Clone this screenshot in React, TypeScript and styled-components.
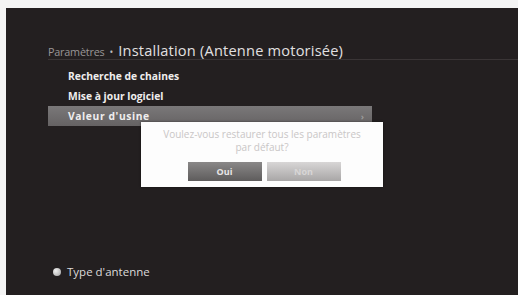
import React from "react";
import styled, { createGlobalStyle } from "styled-components";

const Global = createGlobalStyle`
  html, body { margin: 0; padding: 0; background: #f4f4f4; }
  body { font-family: "Open Sans", "DejaVu Sans", sans-serif; }
`;

const Screen = styled.div`
  width: 518px;
  height: 295px;
  padding: 8px 0 0 6px;
  box-sizing: border-box;
  overflow: hidden;
`;

const Panel = styled.div`
  position: relative;
  height: 100%;
  background: #231f20;
  display: flex;
  flex-direction: column;
  padding: 0 0 0 42px;
  box-sizing: border-box;
`;

const Header = styled.div`
  display: flex;
  align-items: baseline;
  gap: 5px;
  height: 52px;
  padding-top: 32px;
  box-sizing: border-box;
  border-bottom: 1px solid #3a3536;
`;

const Crumb = styled.span`
  font-size: 10.8px;
  letter-spacing: -0.2px;
  color: #9a9696;
`;

const Dot = styled.span`
  font-size: 10px;
  color: #bdbaba;
`;

const Title = styled.span`
  font-size: 14.6px;
  color: #e2e0e0;
  letter-spacing: 0.2px;
`;

const Menu = styled.div`
  display: flex;
  flex-direction: column;
  width: 324px;
  margin-top: 6px;
`;

const Item = styled.div<{ $active?: boolean }>`
  height: 20px;
  display: flex;
  align-items: center;
  justify-content: space-between;
  padding: 0 8px 0 20px;
  font-size: 10.3px;
  font-weight: 700;
  color: #efeded;
  background: ${(p) => (p.$active ? "linear-gradient(#7a7879, #656263)" : "transparent")};
`;

const Label = styled.span<{ $wide?: boolean }>`
  letter-spacing: ${(p) => (p.$wide ? "0.6px" : "0")};
`;

const Chevron = styled.span`
  font-size: 9px;
  color: #9c9a9a;
`;

const Dialog = styled.div`
  position: absolute;
  left: 135px;
  top: 114px;
  width: 242px;
  height: 65px;
  background: #fdfdfd;
  box-shadow: 0 0 2px rgba(0, 0, 0, 0.5);
  display: flex;
  flex-direction: column;
  align-items: center;
  padding-top: 6px;
  box-sizing: border-box;
`;

const Message = styled.div`
  font-size: 10px;
  line-height: 13px;
  color: #c9c6c6;
  text-align: center;
`;

const Buttons = styled.div`
  display: flex;
  gap: 5px;
  margin-top: 8px;
  margin-left: 4px;
`;

const Btn = styled.div<{ $primary?: boolean }>`
  width: 74px;
  height: 19px;
  display: flex;
  align-items: center;
  justify-content: center;
  font-size: 9px;
  font-weight: 700;
  color: ${(p) => (p.$primary ? "#e8e6e6" : "#d8d6d6")};
  background: ${(p) =>
    p.$primary
      ? "linear-gradient(#8a8888, #5e5c5c)"
      : "linear-gradient(#d8d6d6, #a8a6a6)"};
`;

const Footer = styled.div`
  margin-top: auto;
  margin-bottom: 16px;
  display: flex;
  align-items: center;
  gap: 6px;
  padding-left: 5px;
  font-size: 11.5px;
  color: #dcdada;
`;

const Bullet = styled.span`
  width: 8px;
  height: 8px;
  border-radius: 50%;
  background: radial-gradient(circle at 35% 35%, #f0f0f0, #a0a0a0);
`;

export default function App() {
  return (
    <>
      <Global />
      <Screen>
        <Panel>
          <Header>
            <Crumb>Paramètres</Crumb>
            <Dot>•</Dot>
            <Title>Installation (Antenne motorisée)</Title>
          </Header>
          <Menu>
            <Item>
              <Label>Recherche de chaines</Label>
            </Item>
            <Item>
              <Label>Mise à jour logiciel</Label>
            </Item>
            <Item $active>
              <Label $wide>Valeur d'usine</Label>
              <Chevron>›</Chevron>
            </Item>
          </Menu>
          <Dialog>
            <Message>
              Voulez-vous restaurer tous les paramètres
              <br />
              par défaut?
            </Message>
            <Buttons>
              <Btn $primary>Oui</Btn>
              <Btn>Non</Btn>
            </Buttons>
          </Dialog>
          <Footer>
            <Bullet />
            Type d'antenne
          </Footer>
        </Panel>
      </Screen>
    </>
  );
}
